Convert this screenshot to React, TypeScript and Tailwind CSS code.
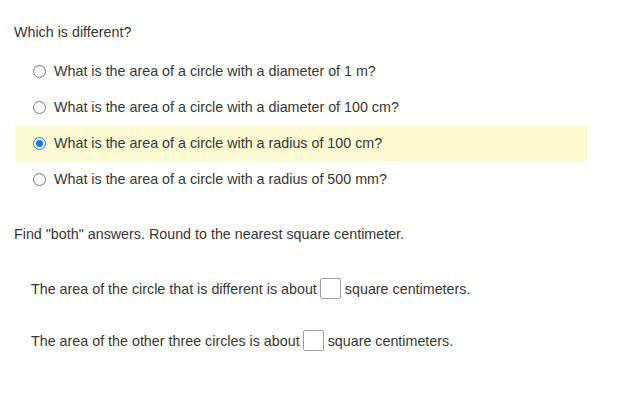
import React from 'react'

const options = [
  'What is the area of a circle with a diameter of 1 m?',
  'What is the area of a circle with a diameter of 100 cm?',
  'What is the area of a circle with a radius of 100 cm?',
  'What is the area of a circle with a radius of 500 mm?',
]

function Radio({ checked }: { checked: boolean }) {
  if (checked) {
    return (
      <span className="flex h-[13px] w-[13px] shrink-0 items-center justify-center rounded-full border-[1.5px] border-[#1a73e8] bg-white">
        <span className="h-[7px] w-[7px] rounded-full bg-[#1a73e8]" />
      </span>
    )
  }
  return <span className="h-[13px] w-[13px] shrink-0 rounded-full border border-[#767676] bg-white" />
}

function Blank() {
  return <span className="ml-[3px] mr-[4px] inline-block h-[21px] w-[21px] rounded-[2px] border border-[#a0a0a0] bg-white align-middle" />
}

export default function App() {
  const selected = 2
  return (
    <div className="flex h-[416px] w-[619px] flex-col bg-white text-[14.3px] leading-4 text-[#363636]" style={{ fontFamily: '"Liberation Sans", Arial, sans-serif' }}>
      <p className="ml-[14px] mt-[24px]">Which is different?</p>
      <div className="ml-[15px] mt-[13px] flex w-[572px] flex-col">
        {options.map((o, i) => (
          <div
            key={o}
            className={`flex h-[36px] items-center gap-[8px] pl-[18px] ${i === selected ? 'bg-[#fcfbd2]' : ''}`}
          >
            <Radio checked={i === selected} />
            <span>{o}</span>
          </div>
        ))}
      </div>
      <p className="ml-[14px] mt-[29px]">Find "both" answers. Round to the nearest square centimeter.</p>
      <div className="ml-[31px] mt-[36px] flex items-center">
        The area of the circle that is different is about
        <Blank />
        square centimeters.
      </div>
      <div className="ml-[31px] mt-[31px] flex items-center">
        The area of the other three circles is about
        <Blank />
        square centimeters.
      </div>
    </div>
  )
}
